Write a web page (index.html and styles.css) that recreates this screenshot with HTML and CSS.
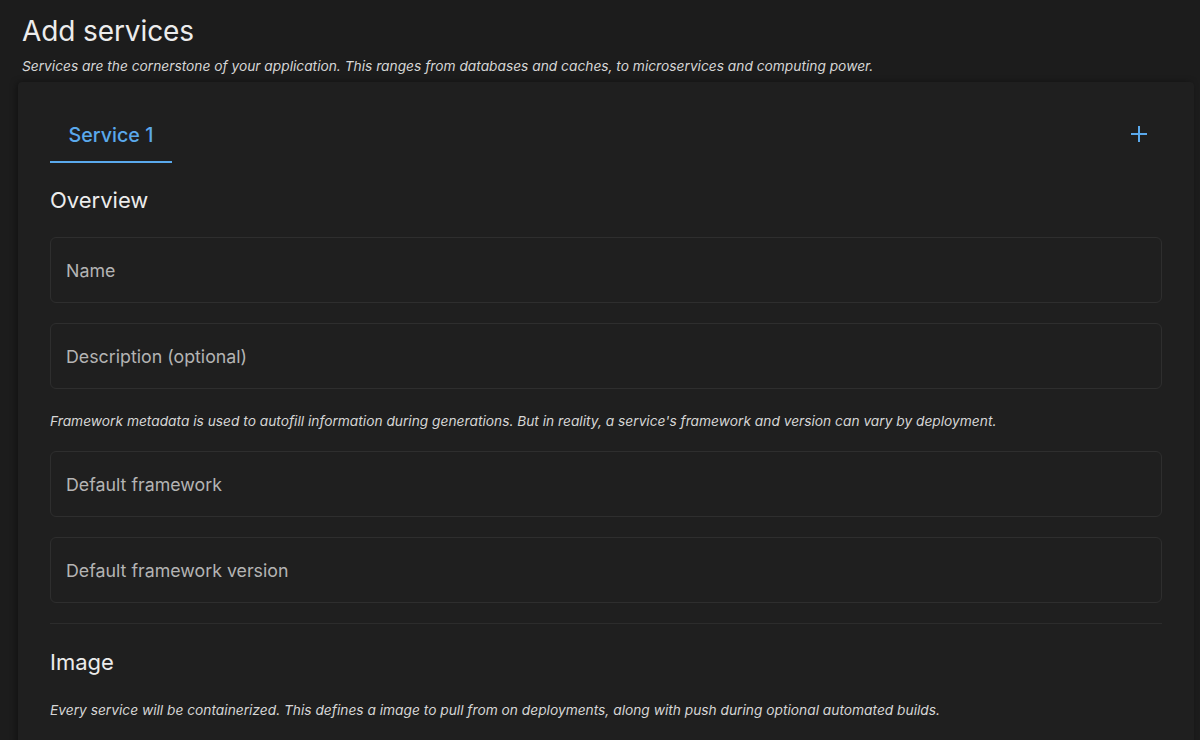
FILE: index.html
```
<!DOCTYPE html>
<html lang="en">
<head>
<meta charset="utf-8">
<title>Add services</title>
<link rel="stylesheet" href="styles.css">
</head>
<body>
<main class="page">
  <h1 class="title">Add services</h1>
  <p class="subtitle">Services are the cornerstone of your application. This ranges from databases and caches, to microservices and computing power.</p>
  <section class="card">
    <div class="tabs">
      <div class="tab active">Service 1</div>
      <button class="add" aria-label="Add service">
        <svg width="20" height="20" viewBox="0 0 20 20"><path d="M10 2v16M2 10h16" stroke="#5aa9ec" stroke-width="2" fill="none"/></svg>
      </button>
    </div>
    <h2 class="section-title">Overview</h2>
    <div class="fields">
      <div class="field">Name</div>
      <div class="field">Description (optional)</div>
    </div>
    <p class="help">Framework metadata is used to autofill information during generations. But in reality, a service's framework and version can vary by deployment.</p>
    <div class="fields">
      <div class="field">Default framework</div>
      <div class="field">Default framework version</div>
    </div>
    <hr class="divider">
    <h2 class="section-title image-title">Image</h2>
    <p class="help last">Every service will be containerized. This defines a image to pull from on deployments, along with push during optional automated builds.</p>
  </section>
</main>
</body>
</html>
```
FILE: styles.css
```
html, body {
  margin: 0;
  padding: 0;
  background: #1c1c1c;
  height: 100%;
  overflow: hidden;
}
body {
  font-family: Inter, "Noto Sans", sans-serif;
  color: #e8e8e8;
}
.page {
  padding: 14px 8px 0 18px;
}
.title {
  margin: 0 0 0 4px;
  font-size: 28px;
  font-weight: 400;
  line-height: 34px;
  color: #ececec;
  letter-spacing: -0.1px;
}
.subtitle {
  margin: 9px 0 0 4px;
  font-size: 13.75px;
  font-style: italic;
  line-height: 18px;
  color: #d6d6d6;
}
.card {
  margin-top: 7px;
  background: #1f1f1f;
  box-shadow: -2px 0 6px rgba(0,0,0,0.35);
  border-radius: 4px;
  padding: 30px 32px 30px 32px;
  width: 1112px;
  height: 640px;
}
.tabs {
  display: flex;
  align-items: flex-start;
  justify-content: space-between;
  height: 51px;
}
.tab {
  height: 46px;
  display: flex;
  align-items: center;
  padding: 0 18.5px 3px;
  font-size: 19.7px;
  font-weight: 500;
  color: #5aa9ec;
  border-bottom: 2px solid #5aa9ec;
}
.add {
  background: none;
  border: 0;
  padding: 0;
  margin: 12px 13px 0 0;
  display: flex;
  cursor: pointer;
}
.section-title {
  margin: 23px 0 23px;
  font-size: 22px;
  font-weight: 400;
  line-height: 28px;
  color: #ececec;
}
.fields {
  display: flex;
  flex-direction: column;
  gap: 20px;
}
.field {
  height: 64px;
  border: 1px solid #2e2e2e;
  border-radius: 6px;
  display: flex;
  align-items: center;
  padding: 0 15px;
  font-size: 17.8px;
  color: #b4b4b4;
}
.help {
  margin: 23px 0 21px;
  font-size: 13.75px;
  font-style: italic;
  line-height: 18px;
  color: #d6d6d6;
}
.help.last {
  margin-top: 0;
}
.divider {
  border: 0;
  border-top: 1px solid #2c2c2c;
  margin: 20px 0 0;
}
.image-title {
  margin: 24px 0 25px;
}
```
